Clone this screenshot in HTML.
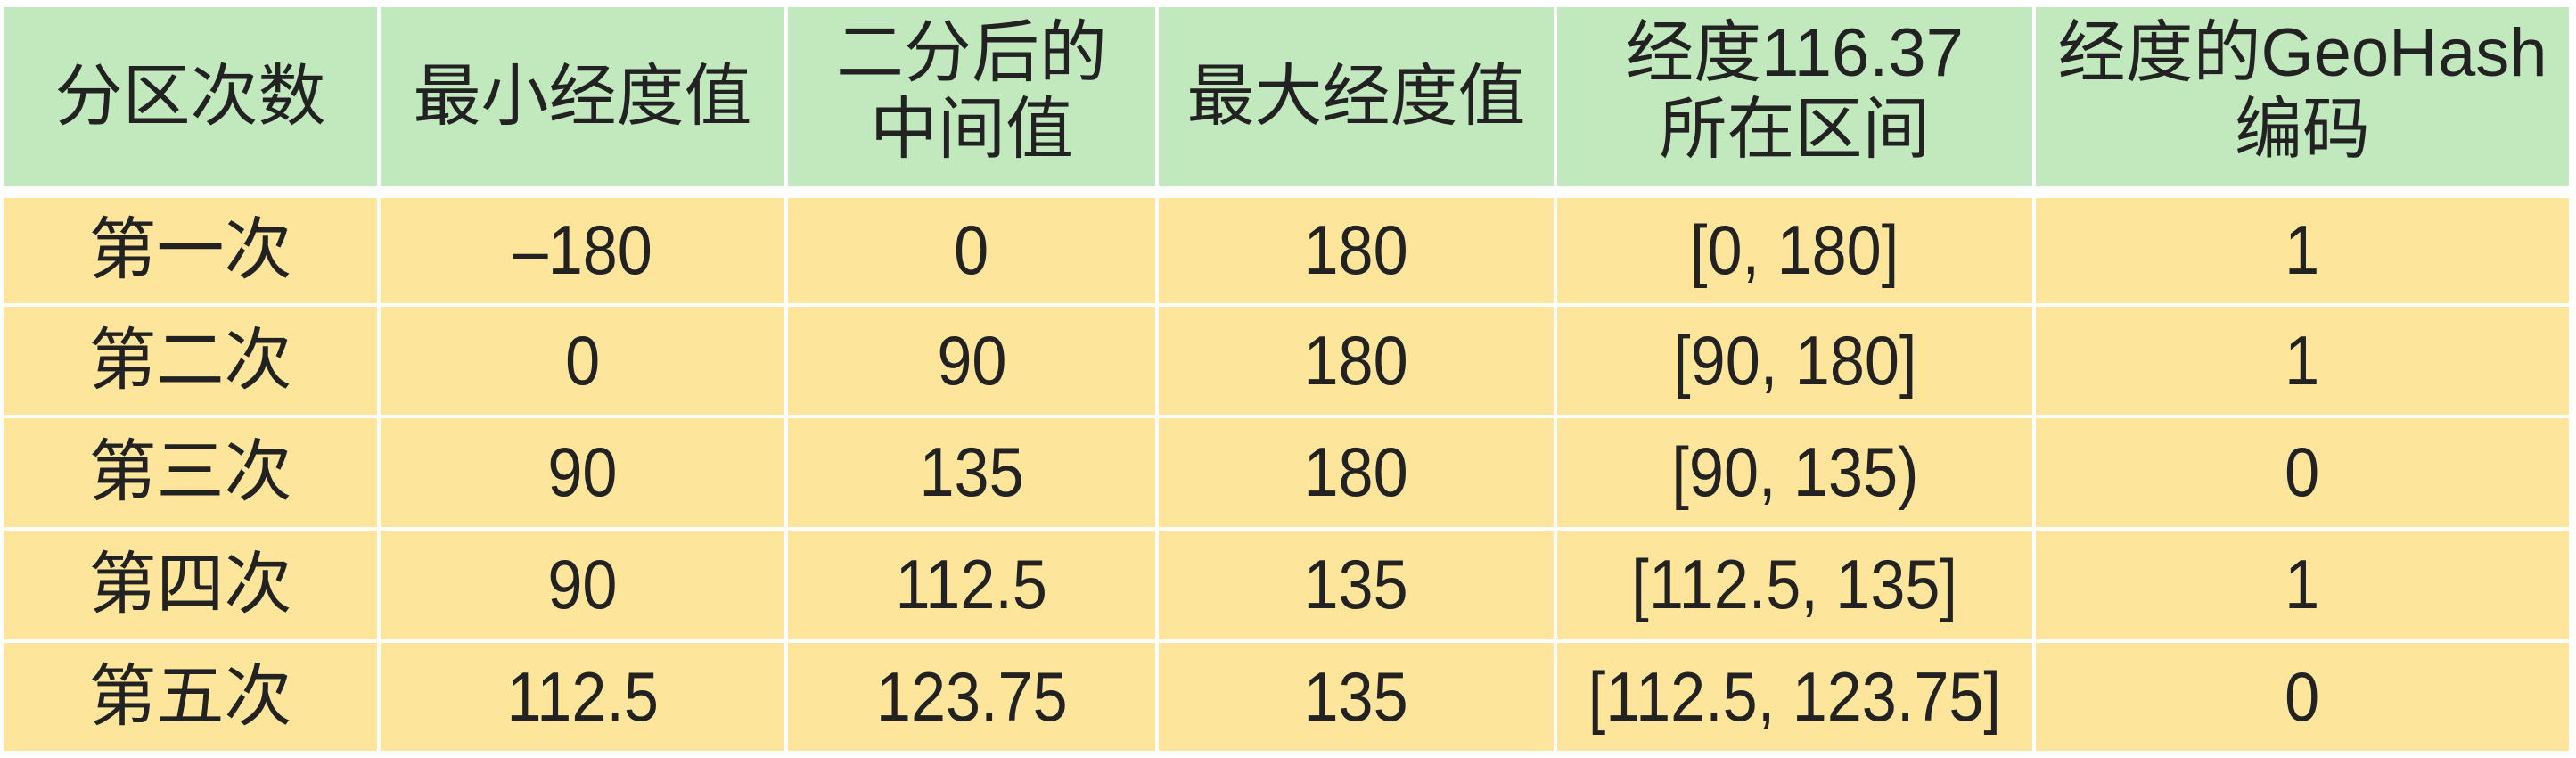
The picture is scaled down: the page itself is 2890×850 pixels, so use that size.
<!DOCTYPE html>
<html><head><meta charset="utf-8"><style>
body{margin:0;width:2890px;height:850px;background:#fff;overflow:hidden;position:relative;font-family:"Liberation Sans","Noto Sans CJK SC",sans-serif;color:#222}
.c{position:absolute;display:flex;align-items:center;justify-content:center;text-align:center;font-size:76px;line-height:1.12}
.h{background:#c2e8be}
.y{background:#fde69c}
.n{display:inline-block;font-size:78px;transform:scaleX(0.9)}
</style></head><body>
<script>
const xs=[[4,423],[427,880],[884,1296],[1300,1743],[1747,2280],[2284,2882]];
const ys=[[8,209],[222,340],[344,465],[469,591],[595,717],[721,842]];
const d=[
["分区次数","最小经度值","二分后的<br>中间值","最大经度值","经度116.37<br>所在区间","经度的GeoHash<br>编码"],
["第一次","–180","0","180","[0, 180]","1"],
["第二次","0","90","180","[90, 180]","1"],
["第三次","90","135","180","[90, 135)","0"],
["第四次","90","112.5","135","[112.5, 135]","1"],
["第五次","112.5","123.75","135","[112.5, 123.75]","0"]];
let h="";
d.forEach((r,i)=>r.forEach((t,j)=>{
let inner;
if(i==0) inner=(j==0||j==1||j==3)?`<span>${t}</span>`:`<span style="position:relative;top:-6px">${t}</span>`;
else if(j==0) inner=`<span>${t}</span>`;
else inner=`<span class="n">${t}</span>`;
h+=`<div class="c ${i?'y':'h'}" style="left:${xs[j][0]}px;width:${xs[j][1]-xs[j][0]}px;top:${ys[i][0]}px;height:${ys[i][1]-ys[i][0]}px">${inner}</div>`;}));
document.write(h);
</script>
</body></html>
